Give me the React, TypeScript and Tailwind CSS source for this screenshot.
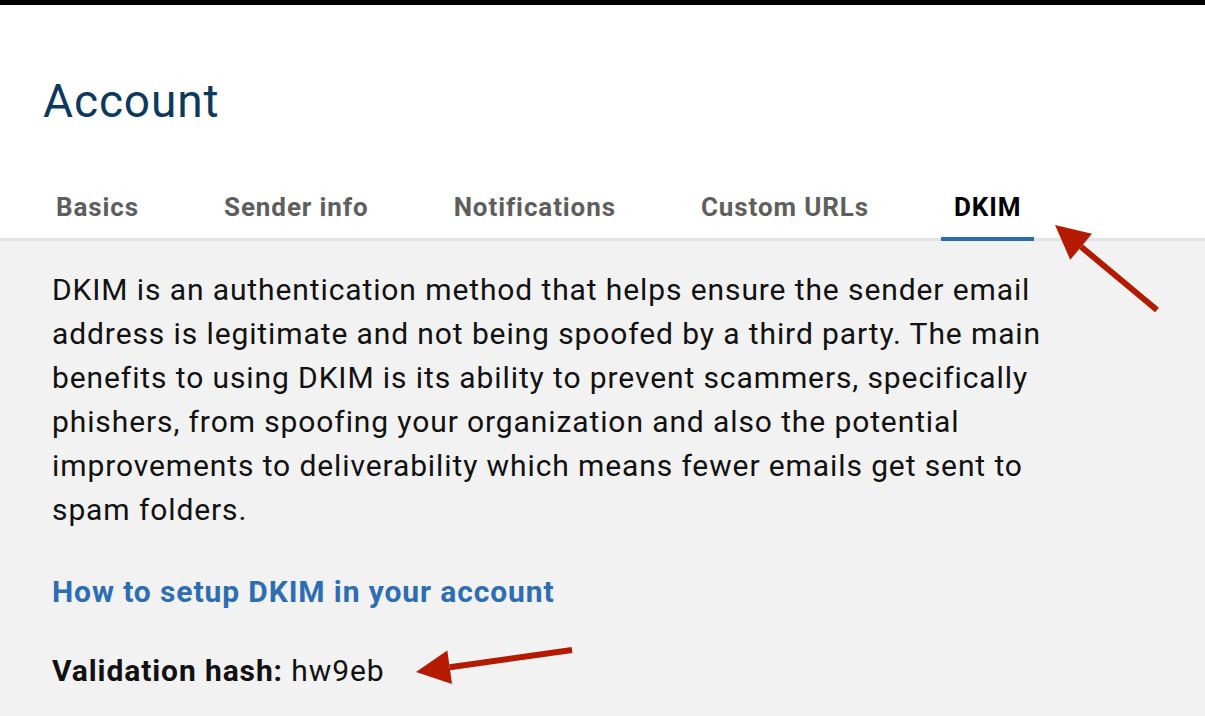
import React from "react";

const tabs = ["Basics", "Sender info", "Notifications", "Custom URLs", "DKIM"];

function Arrow({ x1, y1, x2, y2 }: { x1: number; y1: number; x2: number; y2: number }) {
  // draws a red annotation arrow pointing at (x2, y2)
  const ang = Math.atan2(y2 - y1, x2 - x1);
  const len = 34;
  const w = 17;
  const bx = x2 - Math.cos(ang) * len;
  const by = y2 - Math.sin(ang) * len;
  const px = -Math.sin(ang) * w;
  const py = Math.cos(ang) * w;
  return (
    <>
      <line x1={x1} y1={y1} x2={bx} y2={by} stroke="#b41a00" strokeWidth={6} />
      <polygon points={`${x2},${y2} ${bx + px},${by + py} ${bx - px},${by - py}`} fill="#b41a00" />
    </>
  );
}

export default function App() {
  return (
    <div className="relative w-[1205px] h-[716px] overflow-hidden bg-[#f2f2f2] font-['Roboto',sans-serif] tracking-[0.056em]">
      <div className="bg-white border-t-[5px] border-black">
        <h1 className="pl-[43px] pt-[64px] text-[46px] leading-[64px] text-[#0b3a5e]">Account</h1>
        <div className="flex gap-[59px] pl-[43px] pt-[58px] border-b-[3px] border-[#e3e3e3]">
          {tabs.map((t) => (
            <div
              key={t}
              className={
                t === "DKIM"
                  ? "px-[13px] pb-[12px] -mb-[3px] border-b-4 border-[#2b6cb0] text-[26px] leading-[32px] font-bold text-black"
                  : "px-[13px] pb-[15px] text-[26px] leading-[32px] font-bold text-[#5e5e5e]"
              }
            >
              {t}
            </div>
          ))}
        </div>
      </div>
      <div className="pl-[52px] pt-[27px]">
        <p className="w-[1010px] text-[30px] leading-[44px] text-[#111]">
          DKIM is an authentication method that helps ensure the sender email address is legitimate and not being
          spoofed by a third party. The main benefits to using DKIM is its ability to prevent scammers, specifically
          phishers, from spoofing your organization and also the potential improvements to deliverability which means
          fewer emails get sent to spam folders.
        </p>
        <a className="block mt-[38px] text-[30px] leading-[44px] font-bold text-[#2c6db3]">
          How to setup DKIM in your account
        </a>
        <p className="mt-[35px] text-[30px] leading-[44px] text-[#111]">
          <span className="font-bold">Validation hash:</span> hw9eb
        </p>
      </div>
      <svg className="absolute inset-0 pointer-events-none" width="1205" height="716">
        <Arrow x1={1157} y1={310} x2={1055} y2={225} />
        <Arrow x1={572} y1={650} x2={416} y2={672} />
      </svg>
    </div>
  );
}
